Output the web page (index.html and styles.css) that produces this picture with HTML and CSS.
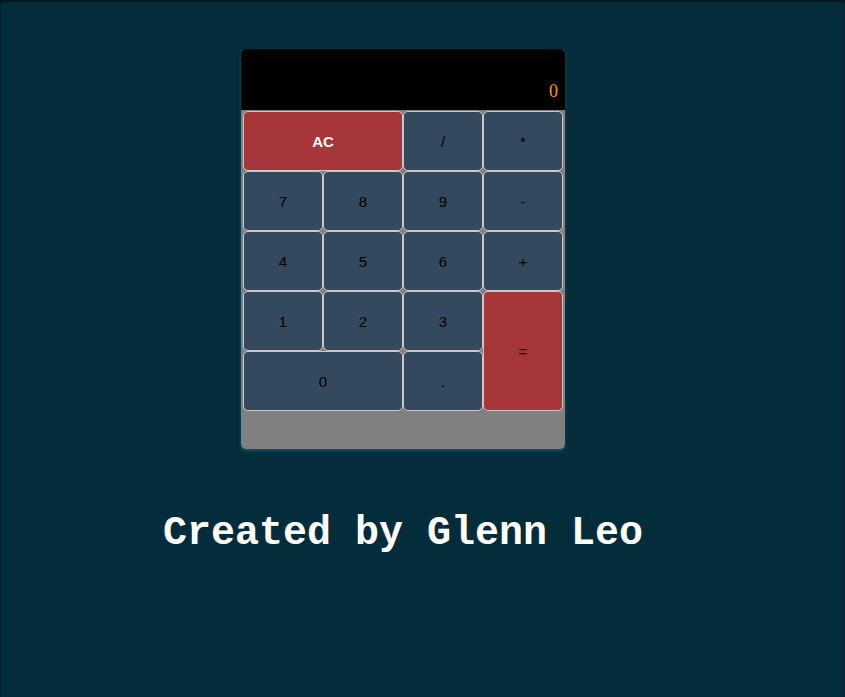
FILE: index.html
```html
<!DOCTYPE html>
<html>
<head>
<meta charset="utf-8">
<link rel="stylesheet" href="styles.css">
</head>
<body>
<div class="page">
  <div class="calc">
    <div class="display"><span class="value">0</span></div>
    <div class="keys">
      <button class="key red ac span2">AC</button>
      <button class="key">/</button>
      <button class="key">*</button>
      <button class="key">7</button>
      <button class="key">8</button>
      <button class="key">9</button>
      <button class="key">-</button>
      <button class="key">4</button>
      <button class="key">5</button>
      <button class="key">6</button>
      <button class="key">+</button>
      <button class="key">1</button>
      <button class="key">2</button>
      <button class="key">3</button>
      <button class="key red eq">=</button>
      <button class="key span2">0</button>
      <button class="key">.</button>
    </div>
  </div>
  <h1 class="credit">Created by Glenn Leo</h1>
</div>
</body>
</html>
```
FILE: styles.css
```css
html, body {
  margin: 0;
  padding: 0;
  height: 100%;
}
body {
  background: #042d3c;
  box-shadow: inset 0 2px 3px rgba(0, 0, 0, 0.55);
  font-family: "Liberation Sans", Arial, sans-serif;
}
.page {
  width: 806px;
  display: flex;
  flex-direction: column;
  align-items: center;
  padding-top: 49px;
}
.calc {
  width: 320px;
  padding: 0 2px 38px;
  background: #808080;
  border-radius: 5px;
  box-shadow: 0 2px 3px #0b5a70;
}
.display {
  height: 61px;
  margin: 0 -2px 1px;
  background: #000;
  border-radius: 5px 5px 0 0;
  display: flex;
  align-items: flex-end;
  justify-content: flex-end;
  padding: 0 7px 10px 0;
  box-sizing: border-box;
}
.value {
  color: #ff9900;
  font-family: "Liberation Serif", "Times New Roman", serif;
  font-size: 18px;
  line-height: 18px;
}
.keys {
  display: grid;
  grid-template-columns: repeat(4, 80px);
  grid-auto-rows: 60px;
}
.key {
  margin: 0;
  padding: 0;
  background: #34495e;
  border: 1px solid #c8c8c8;
  border-radius: 5px;
  color: #000;
  font-family: "Liberation Sans", Arial, sans-serif;
  font-size: 15px;
}
.red {
  background: #a63639;
}
.ac {
  color: #fff;
  font-weight: bold;
}
.span2 {
  grid-column: span 2;
}
.eq {
  grid-column: 4;
  grid-row: 4 / span 2;
}
.credit {
  margin: 65px 0 0;
  color: #fff;
  font-family: "Liberation Mono", "Courier New", monospace;
  font-size: 40px;
  font-weight: bold;
  line-height: 40px;
}
```
